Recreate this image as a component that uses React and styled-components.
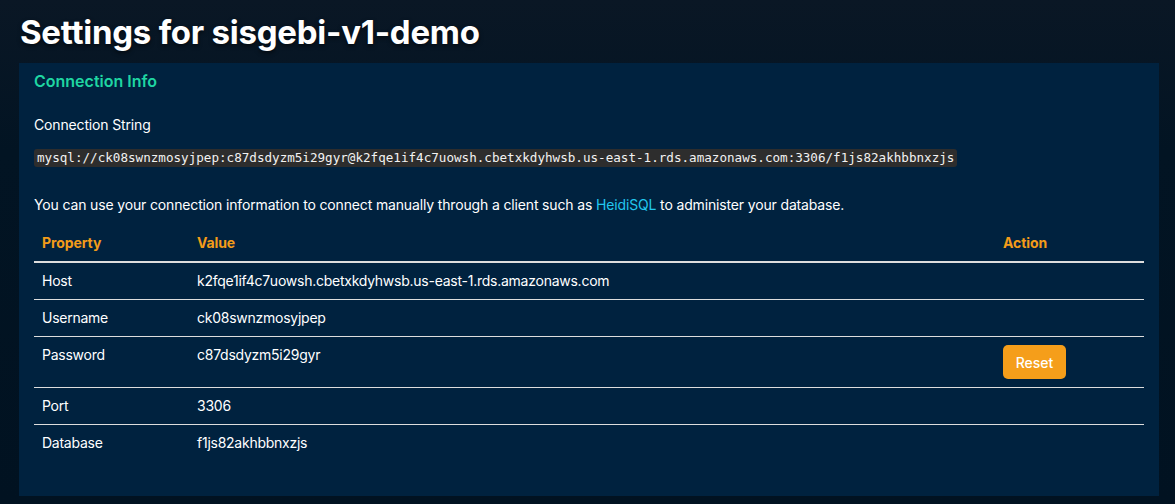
import React from "react";
import styled, { createGlobalStyle } from "styled-components";

const GlobalStyle = createGlobalStyle`
  html, body {
    margin: 0;
    padding: 0;
    background: #021423;
  }
  body {
    font-family: Inter, "Noto Sans", "Liberation Sans", sans-serif;
    color: #ffffff;
  }
`;

const Page = styled.div`
  min-height: 504px;
  box-sizing: border-box;
  padding: 14px 16px 8px 19px;
  background: linear-gradient(180deg, #0a1725 0%, #021423 30%, #011221 100%);
`;

const Title = styled.h1`
  margin: 0 0 12px 1px;
  font-size: 33px;
  line-height: 37px;
  font-weight: 700;
  letter-spacing: -0.25px;
  color: #ffffff;
  text-shadow: 0 2px 4px rgba(0, 0, 0, 0.6);
`;

const Panel = styled.section`
  background: #00223f;
  padding: 8px 15px 35px 15px;
  box-sizing: border-box;
`;

const SectionTitle = styled.h2`
  margin: 0 0 24px 0;
  font-size: 16px;
  line-height: 20px;
  font-weight: 600;
  color: #1fd6a2;
`;

const Label = styled.div`
  font-size: 14px;
  line-height: 20px;
  letter-spacing: -0.15px;
  margin-bottom: 11px;
`;

const Code = styled.code`
  display: inline-block;
  font-family: "DejaVu Sans Mono", "Liberation Mono", monospace;
  font-size: 12.6px;
  line-height: 18px;
  background: #2d2d2d;
  color: #f2f2f2;
  padding: 0 3px;
  border-radius: 3px;
`;

const Paragraph = styled.p`
  margin: 28px 0 10px 0;
  font-size: 14px;
  line-height: 20px;
  letter-spacing: -0.15px;
`;

const Link = styled.a`
  color: #22c7ee;
  text-decoration: none;
`;

const Table = styled.table`
  width: 100%;
  border-collapse: collapse;
  table-layout: fixed;
  font-size: 14px;
  line-height: 20px;
  letter-spacing: -0.25px;
`;

const Th = styled.th`
  box-sizing: border-box;
  text-align: left;
  font-weight: 700;
  color: #f39c19;
  padding: 8px 8px;
  border-bottom: 2px solid #dddddd;
  letter-spacing: -0.1px;
  width: ${({ w }) => w || "auto"};
`;

const Row = styled.tr`
  border-bottom: ${({ last }) => (last ? "none" : "1px solid #dddddd")};
`;

const Td = styled.td`
  padding: 8px 8px;
  vertical-align: top;
`;

const Button = styled.button`
  height: 34px;
  width: 63px;
  border: none;
  border-radius: 5px;
  background: #f59e1a;
  color: #ffffff;
  font-family: inherit;
  font-size: 14px;
  font-weight: 500;
  cursor: pointer;
`;

const rows = [
  { prop: "Host", value: "k2fqe1if4c7uowsh.cbetxkdyhwsb.us-east-1.rds.amazonaws.com" },
  { prop: "Username", value: "ck08swnzmosyjpep" },
  { prop: "Password", value: "c87dsdyzm5i29gyr", action: true },
  { prop: "Port", value: "3306" },
  { prop: "Database", value: "f1js82akhbbnxzjs" },
];

const App = () => {
  return (
    <>
      <GlobalStyle />
      <Page>
        <Title>Settings for sisgebi-v1-demo</Title>
        <Panel>
          <SectionTitle>Connection Info</SectionTitle>
          <Label>Connection String</Label>
          <Code>
            mysql://ck08swnzmosyjpep:c87dsdyzm5i29gyr@k2fqe1if4c7uowsh.cbetxkdyhwsb.us-east-1.rds.amazonaws.com:3306/f1js82akhbbnxzjs
          </Code>
          <Paragraph>
            You can use your connection information to connect manually through
            a client such as <Link href="#">HeidiSQL</Link> to administer your
            database.
          </Paragraph>
          <Table>
            <thead>
              <tr>
                <Th w="155px">Property</Th>
                <Th>Value</Th>
                <Th w="149px">Action</Th>
              </tr>
            </thead>
            <tbody>
              {rows.map((row, i) => (
                <Row key={row.prop} last={i === rows.length - 1}>
                  <Td>{row.prop}</Td>
                  <Td>{row.value}</Td>
                  <Td>{row.action && <Button>Reset</Button>}</Td>
                </Row>
              ))}
            </tbody>
          </Table>
        </Panel>
      </Page>
    </>
  );
};

export default App;
